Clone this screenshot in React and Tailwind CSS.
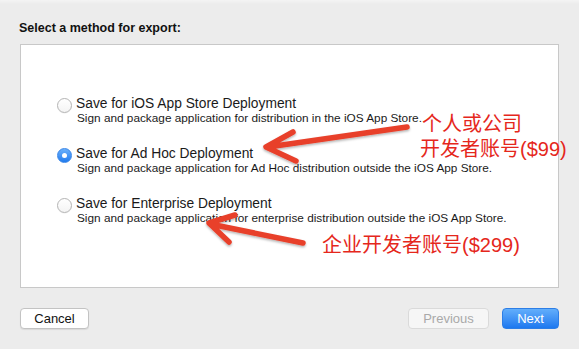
import React from "react";

function Radio({ checked }) {
  if (checked) {
    return (
      <div className="mt-[2px] flex h-[15px] w-[15px] shrink-0 items-center justify-center rounded-full border border-[#3a86e8] bg-gradient-to-b from-[#6ab0fb] to-[#1f7bee]">
        <div className="h-[5px] w-[5px] rounded-full bg-white" />
      </div>
    );
  }
  return (
    <div className="mt-[2px] h-[15px] w-[15px] shrink-0 rounded-full border border-[#b4b4b4] bg-gradient-to-b from-white to-[#f4f4f4] shadow-[0_0.5px_0.5px_rgba(0,0,0,0.08)]" />
  );
}

function Option({ checked, title, desc }) {
  return (
    <div className="flex items-start gap-[4px]">
      <Radio checked={checked} />
      <div className="flex flex-col">
        <div className="text-[13.8px] leading-[16px] text-[#1a1a1a]">{title}</div>
        <div className="pl-[1px] text-[11.8px] leading-[12px] text-[#1a1a1a]">{desc}</div>
      </div>
    </div>
  );
}

export default function App() {
  return (
    <div className="relative h-[349px] w-[579px] overflow-hidden bg-[#ececec] font-['Liberation_Sans','Noto_Sans_CJK_SC',sans-serif]">
      <div className="h-[4px] bg-gradient-to-b from-[#f4f4f4] to-[#ececec]" />
      <div className="flex flex-col px-[20px]">
        <div className="ml-[-1px] mt-[16px] text-[12.5px] font-bold leading-[16px] text-[#111]">
          Select a method for export:
        </div>
        <div className="mt-[8px] flex h-[244px] flex-col gap-[22px] border border-[#c8c8c8] bg-white pl-[36px] pt-[51px]">
          <Option
            title="Save for iOS App Store Deployment"
            desc="Sign and package application for distribution in the iOS App Store."
          />
          <Option
            checked
            title="Save for Ad Hoc Deployment"
            desc="Sign and package application for Ad Hoc distribution outside the iOS App Store."
          />
          <Option
            title="Save for Enterprise Deployment"
            desc="Sign and package application for enterprise distribution outside the iOS App Store."
          />
        </div>
        <div className="mt-[20px] flex items-center justify-between">
          <button className="h-[21px] w-[69px] rounded-[4px] border border-[#c3c3c3] bg-white text-[13px] leading-[19px] text-[#111] shadow-[0_1px_1px_rgba(0,0,0,0.08)]">
            Cancel
          </button>
          <div className="flex gap-[13px]">
            <button className="h-[21px] w-[81px] rounded-[4px] border border-[#dadada] bg-[#f6f6f6] text-[13px] leading-[19px] text-[#a9a9a9]">
              Previous
            </button>
            <button className="h-[21px] w-[57px] rounded-[4px] border border-[#2d7ee6] bg-gradient-to-b from-[#62aefb] to-[#1c78ef] text-[13px] leading-[19px] text-white">
              Next
            </button>
          </div>
        </div>
      </div>

      <svg
        className="pointer-events-none absolute left-0 top-0"
        width="579"
        height="349"
        viewBox="0 0 579 349"
      >
        <defs>
          <filter id="sh" x="-10%" y="-20%" width="120%" height="160%">
            <feDropShadow dx="0" dy="1.5" stdDeviation="1.2" floodColor="#000" floodOpacity="0.3" />
          </filter>
        </defs>
        <g
          filter="url(#sh)"
          fill="none"
          stroke="#e8402c"
          strokeWidth="5.5"
          strokeLinecap="round"
          strokeLinejoin="round"
        >
          <path d="M407 127 L268 147 M293 132 L266 147 L296 161" />
          <path d="M303 243 L210 224 M235 215 L209 223 L229 242" />
        </g>
      </svg>

      <div className="absolute left-[422px] top-[112px] text-[20px] leading-[25px] text-[#e5271c]">
        个人或公司
      </div>
      <div className="absolute left-[420px] top-[137px] text-[20px] leading-[25px] text-[#e5271c]">
        开发者账号($99)
      </div>
      <div className="absolute left-[322px] top-[233px] text-[20px] leading-[25px] text-[#e5271c]">
        企业开发者账号($299)
      </div>
    </div>
  );
}
